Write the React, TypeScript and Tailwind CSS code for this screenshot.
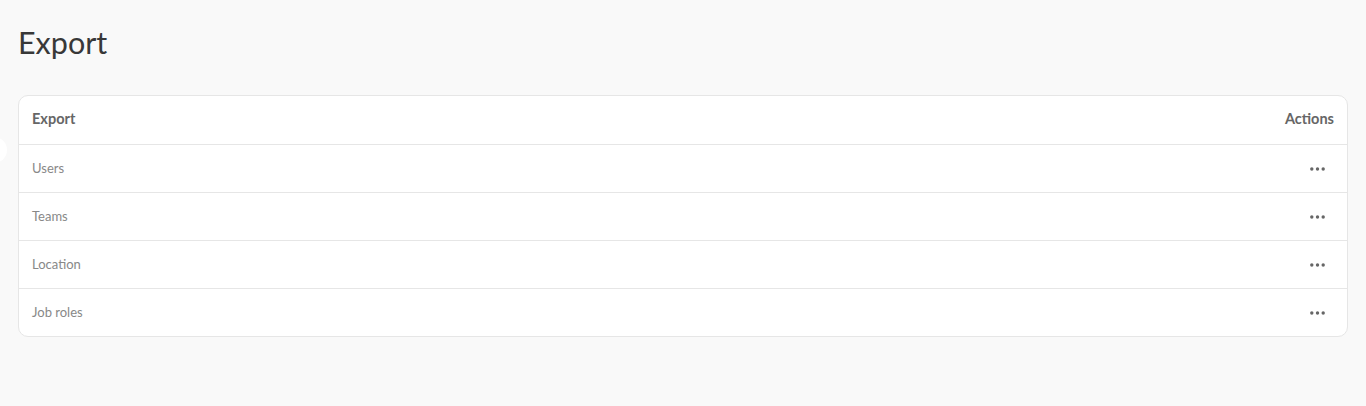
import React from 'react';

const rows = ['Users', 'Teams', 'Location', 'Job roles'];

function Dots() {
  return (
    <svg width="15" height="4" viewBox="0 0 15 4" className="text-[#666]">
      <circle cx="1.8" cy="2" r="1.7" fill="currentColor" />
      <circle cx="7.5" cy="2" r="1.7" fill="currentColor" />
      <circle cx="13.2" cy="2" r="1.7" fill="currentColor" />
    </svg>
  );
}

export default function App() {
  return (
    <div
      className="relative min-h-[406px] bg-[#f9f9f9] px-[18px] pt-[22px] overflow-hidden"
      style={{ fontFamily: 'Lato, "Open Sans", sans-serif' }}
    >
      {/* collapsed sidebar toggle peeking in from the left */}
      <div className="absolute left-[-19px] top-[137px] h-[26px] w-[26px] rounded-full bg-white" />

      <h1 className="text-[30.5px] leading-[40px] font-normal text-[#383838]">Export</h1>

      <div className="mt-[33px] rounded-[10px] border border-[#e6e6e6] bg-white">
        <div className="flex h-[48px] items-center justify-between pl-[13px] pr-[13px] pb-[3px]">
          <span className="text-[14.5px] font-bold text-[#666]">Export</span>
          <span className="text-[14.5px] font-bold text-[#666]">Actions</span>
        </div>
        {rows.map(name => (
          <div
            key={name}
            className="flex h-[48px] items-center justify-between border-t border-[#e6e6e6] pl-[13px] pr-[22px]"
          >
            <span className="text-[13px] text-[#888]">{name}</span>
            <Dots />
          </div>
        ))}
      </div>
    </div>
  );
}
